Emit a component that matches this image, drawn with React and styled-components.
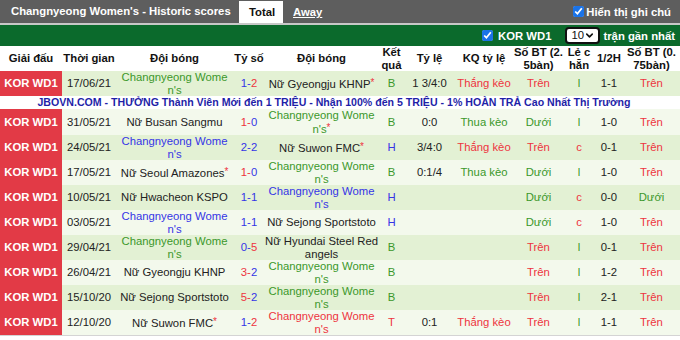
import React from "react";
import styled, { createGlobalStyle } from "styled-components";
import { ChevronDown } from "lucide-react";

const RED = "#ee3440";
const GREEN = "#3b982b";
const BLUE = "#3535e6";

const GlobalStyle = createGlobalStyle`
  html, body {
    margin: 0;
    padding: 0;
    background: #fff;
  }
  body {
    font-family: "Liberation Sans", Arial, sans-serif;
    font-size: 11.3px;
    color: #222;
  }
`;

const WIDTHS = [62, 54, 117, 32, 113, 27, 49, 60, 49, 32, 28, 57];

const HEADERS = [
  "Giải đấu",
  "Thời gian",
  "Đội bóng",
  "Tỷ số",
  "Đội bóng",
  "Kết\nquả",
  "Tỷ lệ",
  "KQ tỷ lệ",
  "Số BT (2.\n5bàn)",
  "Lẻ c\nhẵn",
  "1/2H",
  "Số BT (0.\n75bàn)",
];

const CN = "Changnyeong Wome\nn's";

// res: B = thua, H = hoà, T = thắng (for Changnyeong)
const MATCHES = [
  { date: "17/06/21", home: CN, away: "Nữ Gyeongju KHNP", star: "away", cnHome: true, score: [1, 2], res: "B", hc: "1 3/4:0", hcRes: "Thắng kèo", ou: "Trên", oe: "l", half: "1-1", ou2: "Trên" },
  { date: "31/05/21", home: "Nữ Busan Sangmu", away: CN, star: "away", cnHome: false, score: [1, 0], res: "B", hc: "0:0", hcRes: "Thua kèo", ou: "Dưới", oe: "l", half: "1-0", ou2: "Trên" },
  { date: "24/05/21", home: CN, away: "Nữ Suwon FMC", star: "away", cnHome: true, score: [2, 2], res: "H", hc: "3/4:0", hcRes: "Thắng kèo", ou: "Trên", oe: "c", half: "0-1", ou2: "Trên" },
  { date: "17/05/21", home: "Nữ Seoul Amazones", away: CN, star: "home", cnHome: false, score: [1, 0], res: "B", hc: "0:1/4", hcRes: "Thua kèo", ou: "Dưới", oe: "l", half: "1-0", ou2: "Trên" },
  { date: "10/05/21", home: "Nữ Hwacheon KSPO", away: CN, cnHome: false, score: [1, 1], res: "H", hc: "", hcRes: "", ou: "Dưới", oe: "c", half: "0-0", ou2: "Dưới" },
  { date: "03/05/21", home: CN, away: "Nữ Sejong Sportstoto", cnHome: true, score: [1, 1], res: "H", hc: "", hcRes: "", ou: "Dưới", oe: "c", half: "1-0", ou2: "Trên" },
  { date: "29/04/21", home: CN, away: "Nữ Hyundai Steel Red\nangels", cnHome: true, score: [0, 5], res: "B", hc: "", hcRes: "", ou: "Trên", oe: "l", half: "0-1", ou2: "Trên" },
  { date: "26/04/21", home: "Nữ Gyeongju KHNP", away: CN, cnHome: false, score: [3, 2], res: "B", hc: "", hcRes: "", ou: "Trên", oe: "l", half: "1-2", ou2: "Trên" },
  { date: "15/10/20", home: "Nữ Sejong Sportstoto", away: CN, cnHome: false, score: [5, 2], res: "B", hc: "", hcRes: "", ou: "Trên", oe: "l", half: "2-1", ou2: "Trên" },
  { date: "12/10/20", home: "Nữ Suwon FMC", away: CN, star: "home", cnHome: false, score: [1, 2], res: "T", hc: "0:1", hcRes: "Thắng kèo", ou: "Trên", oe: "l", half: "1-1", ou2: "Trên" },
];

const RES_COLOR = { B: GREEN, H: BLUE, T: RED };
const OU_COLOR = { "Trên": RED, "Dưới": GREEN };
const HC_COLOR = { "Thắng kèo": RED, "Thua kèo": GREEN };
const OE_COLOR = { l: GREEN, c: RED };

const AD_TEXT =
  "JBOVN.COM - THƯỞNG Thành Viên Mới đến 1 TRIỆU - Nhận 100% đến 5 TRIỆU - 1% HOÀN TRẢ Cao Nhất Thị Trường";

export default function App() {
  return (
    <>
      <GlobalStyle />
      <Wrapper>
        <TitleBar>
          <Title>Changnyeong Women's - Historic scores</Title>
          <Tab $active>Total</Tab>
          <Tab>Away</Tab>
          <Spacer />
          <Toggle>
            <Check type="checkbox" defaultChecked />
            Hiển thị ghi chú
          </Toggle>
        </TitleBar>
        <FilterBar>
          <Toggle>
            <Check type="checkbox" defaultChecked />
            KOR WD1
          </Toggle>
          <SelectBox>
            <CountSelect defaultValue="10">
              <option value="5">5</option>
              <option value="10">10</option>
              <option value="20">20</option>
            </CountSelect>
            <Chevron size={11} strokeWidth={3.5} />
          </SelectBox>
          <FilterLabel>trận gần nhất</FilterLabel>
        </FilterBar>
        <Table>
          <colgroup>
            {WIDTHS.map((w, i) => (
              <col key={i} width={w} />
            ))}
          </colgroup>
          <thead>
            <tr>
              {HEADERS.map((h, i) => (
                <Th key={i}>{h}</Th>
              ))}
            </tr>
          </thead>
          <tbody>
            {MATCHES.map((m, i) => (
              <React.Fragment key={m.date}>
                <MatchRow m={m} alt={i % 2 === 1} />
                {i === 0 && (
                  <tr>
                    <AdCell colSpan={12}>{AD_TEXT}</AdCell>
                  </tr>
                )}
              </React.Fragment>
            ))}
          </tbody>
        </Table>
      </Wrapper>
    </>
  );
}

function MatchRow({ m, alt }) {
  const [h, a] = m.score;
  const hc = h > a ? RED : BLUE;
  const ac = a > h ? RED : BLUE;
  const cnColor = RES_COLOR[m.res];

  return (
    <Row $alt={alt}>
      <League>KOR WD1</League>
      <Td>{m.date}</Td>
      <Td $c={m.cnHome ? cnColor : undefined}>
        {m.home}
        {m.star === "home" && <Star>*</Star>}
      </Td>
      <Td>
        <span style={{ color: hc }}>{h}-</span>
        <span style={{ color: ac }}>{a}</span>
      </Td>
      <Td $c={m.cnHome ? undefined : cnColor}>
        {m.away}
        {m.star === "away" && <Star>*</Star>}
      </Td>
      <Td $c={cnColor}>{m.res}</Td>
      <Td>{m.hc}</Td>
      <Td $c={HC_COLOR[m.hcRes]}>{m.hcRes}</Td>
      <Td $c={OU_COLOR[m.ou]}>{m.ou}</Td>
      <Td $c={OE_COLOR[m.oe]}>{m.oe}</Td>
      <Td>{m.half}</Td>
      <Td $c={OU_COLOR[m.ou2]}>{m.ou2}</Td>
    </Row>
  );
}

const Wrapper = styled.div`
  width: 680px;
`;

const TitleBar = styled.div`
  display: flex;
  align-items: stretch;
  height: 23px;
  background: #5e5e5e;
  border-bottom: 2px solid #c8c8c8;
  color: #fff;
  font-weight: 700;
`;

const Title = styled.div`
  padding: 0 0 0 11px;
  line-height: 23px;
  width: 228px;
  white-space: nowrap;
`;

const Tab = styled.div`
  margin-top: 1px;
  padding: 0 10px;
  line-height: 22px;
  background: ${({ $active }) => ($active ? "#fff" : "transparent")};
  color: ${({ $active }) => ($active ? "#111" : "#fff")};
  text-decoration: ${({ $active }) => ($active ? "none" : "underline")};
  width: ${({ $active }) => ($active ? "44px" : "auto")};
  box-sizing: border-box;
  text-align: center;
`;

const Spacer = styled.div`
  flex: 1;
`;

const Toggle = styled.label`
  display: flex;
  align-items: center;
  padding-right: 9px;
  color: #fff;
  font-weight: 700;
  white-space: nowrap;
`;

const Check = styled.input`
  width: 11px;
  height: 11px;
  margin: 0 2px 0 0;
  accent-color: #1a73e8;
`;

const FilterBar = styled.div`
  display: flex;
  align-items: center;
  justify-content: flex-end;
  height: 21px;
  padding-right: 5px;
  background: #0b6a2c;
  color: #fff;
  font-weight: 700;

  ${Toggle} {
    padding-right: 14px;
  }
  ${Check} {
    margin-right: 5px;
  }
`;

const SelectBox = styled.div`
  position: relative;
  width: 35px;
  height: 17px;
`;

const CountSelect = styled.select`
  appearance: none;
  -webkit-appearance: none;
  box-sizing: border-box;
  width: 35px;
  height: 17px;
  padding: 0 0 0 4px;
  border: 2px solid #111;
  border-radius: 4px;
  background: #fff;
  color: #111;
  font-family: "Liberation Sans", Arial, sans-serif;
  font-size: 11.3px;
  line-height: 13px;
`;

const Chevron = styled(ChevronDown)`
  position: absolute;
  right: 5px;
  top: 3px;
  color: #111;
  pointer-events: none;
`;

const FilterLabel = styled.span`
  margin-left: 3px;
`;

const Table = styled.table`
  width: 680px;
  table-layout: fixed;
  border-collapse: collapse;
  border-bottom: 1px solid #d4d4d4;
`;

const Th = styled.th`
  height: 25px;
  padding: 0;
  font-weight: 700;
  line-height: 12.5px;
  color: #111;
  white-space: pre;
  text-align: center;
  background: #fff;
`;

const Row = styled.tr`
  background: ${({ $alt }) => ($alt ? "#f3f9ec" : "#e3f1d4")};
`;

const Td = styled.td`
  height: 25px;
  padding: 0;
  line-height: 12.5px;
  text-align: center;
  white-space: pre;
  overflow: visible;
  color: ${({ $c }) => $c || "#222"};
`;

const League = styled(Td)`
  background: #e23a46;
  color: #fff;
  font-weight: 700;
`;

const Star = styled.span`
  color: ${RED};
  font-size: 10px;
  vertical-align: 2px;
`;

const AdCell = styled.td`
  height: 13px;
  padding: 0 12px 0 0;
  line-height: 13px;
  font-size: 10.6px;
  text-align: center;
  background: #fff;
  color: #1f1fa8;
  font-weight: 700;
  white-space: nowrap;
`;
